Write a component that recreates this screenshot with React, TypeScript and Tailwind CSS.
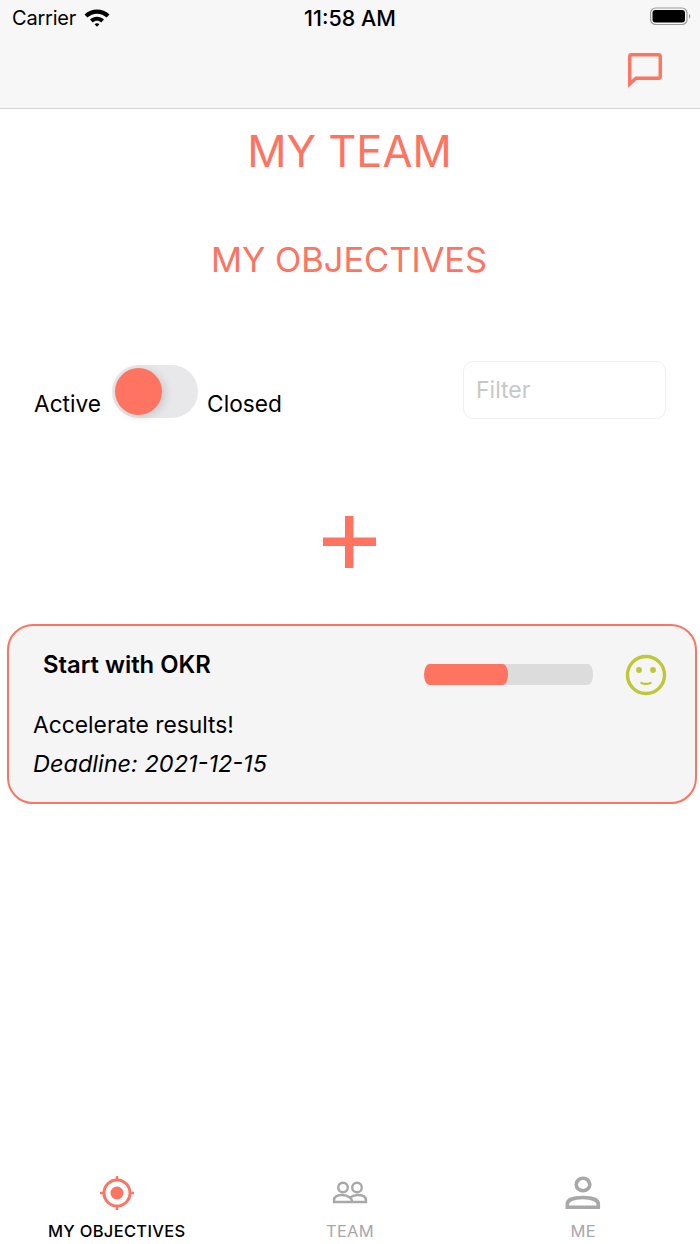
export default function App() {
  return (
    <div className="w-[700px] h-[1244px] bg-white flex flex-col overflow-hidden text-black" style={{ fontFamily: 'Inter, "Liberation Sans", sans-serif' }}>
      <header className="h-[109px] shrink-0 bg-[#f7f7f7] border-b border-[#d4d4d4] flex flex-col">
        <div className="h-[36px] flex items-center justify-between pl-[12px] pr-[8px] relative">
          <div className="flex items-center gap-[7px]">
            <span className="text-[20px] tracking-[-0.2px]">Carrier</span>
            <svg width="28" height="20" viewBox="0 0 28 20" className="-mt-[3px]">
              <path d="M1.500 7.500C8.500 .8 19.500 .8 26.500 7.500L23.600 10.500C18.200 5.400 9.800 5.400 4.400 10.500Z" fill="#000" />
              <path d="M7 12.600C11 8.900 17 8.900 21 12.600L18.200 15.400C15.800 13.200 12.200 13.200 9.800 15.400Z" fill="#000" />
              <path d="M11.600 17.200C13 15.900 15 15.900 16.400 17.200L14 19.700Z" fill="#000" />
            </svg>
          </div>
          <span className="absolute left-0 right-0 text-center text-[21.500px] font-medium">11:58 AM</span>
          <svg width="44" height="20" viewBox="0 0 44 20" className="-mt-[4px]">
            <rect x="2.600" y="2" width="36.400" height="16.500" rx="5" fill="none" stroke="#9a9a9a" strokeWidth="1.200" />
            <rect x="4.500" y="4" width="32.500" height="12.500" rx="3" fill="#000" />
            <path d="M41 8c1.500.400 1.500 4.100 0 4.500z" fill="#8a8a8a" />
          </svg>
        </div>
        <div className="flex-1 flex justify-end pr-[37px] pt-[17px]">
          <svg width="36" height="36" viewBox="0 0 36 36">
            <path d="M2.750 3.500Q2.750 1.750 4.500 1.750H31.500Q33.250 1.750 33.250 3.500V23.500Q33.250 25.250 31.500 25.250H9L2.750 31Z" fill="none" stroke="#ff7361" strokeWidth="3.400" strokeLinejoin="miter" />
          </svg>
        </div>
      </header>

      <main className="flex-1 flex flex-col">
        <h1 className="text-center text-[43.500px] leading-[54px] mt-[15px] pr-[1px] text-[#ff7361] font-normal">MY TEAM</h1>
        <h2 className="text-center text-[34.400px] leading-[42px] mt-[61px] pr-[2px] text-[#ff7361] font-normal">MY OBJECTIVES</h2>

        <div className="flex items-start justify-between mt-[80px] pl-[34px] pr-[34px]">
          <div className="flex items-end h-[58px]">
            <span className="text-[22.700px] leading-[29px] mr-[11px] mb-[1px]">Active</span>
            <div className="w-[86px] h-[53px] mb-[1px] rounded-full bg-[#e8e8ea] p-[3px] flex items-center">
              <div className="w-[47px] h-[47px] rounded-full bg-[#ff7361] shadow-[3px_2px_8px_rgba(0,0,0,0.14)]" />
            </div>
            <span className="text-[22.700px] leading-[29px] ml-[9px] mb-[1px]">Closed</span>
          </div>
          <div className="w-[203px] h-[58px] rounded-[10px] border border-[#efefef] flex items-center pl-[12px]">
            <span className="text-[23px] text-[#c8c8ca]">Filter</span>
          </div>
        </div>

        <div className="flex justify-center mt-[97px]">
          <svg width="54" height="54" viewBox="0 0 54 54">
            <rect x="22" y="0" width="8.500" height="52" fill="#ff7361" />
            <rect x="0" y="21.500" width="53" height="8.500" fill="#ff7361" />
          </svg>
        </div>

        <section className="mt-[54px] ml-[7px] w-[690px] h-[180px] rounded-[26px] border-2 border-[#ff7361] bg-[#f5f5f5] relative pl-[24px]">
          <div className="flex items-start">
            <div className="pl-[10px] pt-[24px] text-[23.800px] leading-[30px] font-semibold w-[391px]">Start with OKR</div>
            <div className="mt-[38px] w-[169px] h-[21px] rounded-[5px/10px] bg-[#dcdcdc] overflow-hidden">
              <div className="w-[84px] h-full rounded-[5px/10px] bg-[#ff7361]" />
            </div>
            <svg width="42" height="42" viewBox="0 0 42 42" className="mt-[28px] ml-[32px]">
              <circle cx="21" cy="21" r="18.500" fill="none" stroke="#bdc738" strokeWidth="3.400" />
              <circle cx="14" cy="16" r="2.900" fill="#bdc738" />
              <circle cx="28" cy="16" r="2.900" fill="#bdc738" />
              <path d="M16.500 29c3 1.300 6 1.300 9 0" fill="none" stroke="#bdc738" strokeWidth="2.400" strokeLinecap="round" />
            </svg>
          </div>
          <p className="text-[22.800px] leading-[30px] mt-[14px]">Accelerate results!</p>
          <p className="text-[23.500px] leading-[30px] mt-[9px] italic">Deadline: 2021-12-15</p>
        </section>
      </main>

      <nav className="h-[84px] shrink-0 grid grid-cols-3 bg-white">
        <div className="flex flex-col items-center">
          <svg width="36" height="36" viewBox="0 0 36 36" className="mt-[15px]">
            <circle cx="18" cy="18" r="13" fill="none" stroke="#ff7361" strokeWidth="3" />
            <circle cx="18" cy="18" r="6.500" fill="#ff7361" />
            <path d="M18 1v5M18 30v5M1 18h5M30 18h5" stroke="#ff7361" strokeWidth="2.400" />
          </svg>
          <span className="text-[16.500px] leading-[20px] tracking-[0.3px] mt-[10px] font-medium">MY OBJECTIVES</span>
        </div>
        <div className="flex flex-col items-center">
          <svg width="36" height="36" viewBox="0 0 36 36" className="mt-[15px]">
            <g fill="none" stroke="#a8a8a8" strokeWidth="2.400">
              <circle cx="11" cy="12.500" r="4.800" />
              <circle cx="25" cy="12.500" r="4.800" />
              <path d="M2 27v-1.500c0-4 4-5.500 8-5.500 3.500 0 6 1 8 2.500 2-1.500 4.500-2.500 8-2.500 4 0 8 1.500 8 5.500V27Z" />
              <path d="M18 22.500c1.500 1.200 2 2.500 2 4.500" />
            </g>
          </svg>
          <span className="text-[16.500px] leading-[20px] tracking-[0.3px] mt-[10px] text-[#a8a8a8]">TEAM</span>
        </div>
        <div className="flex flex-col items-center">
          <svg width="36" height="38" viewBox="0 0 36 38" className="mt-[15px] mb-[-2px]">
            <g fill="none" stroke="#a8a8a8" strokeWidth="3.600">
              <ellipse cx="18" cy="9.500" rx="6.800" ry="6.200" />
              <path d="M2.300 32.200V29c0-4 6-6.500 15.500-6.500s15.500 2.500 15.500 6.500v3.200Z" />
            </g>
          </svg>
          <span className="text-[16.500px] leading-[20px] tracking-[0.3px] mt-[10px] text-[#a8a8a8]">ME</span>
        </div>
      </nav>
    </div>
  );
}
